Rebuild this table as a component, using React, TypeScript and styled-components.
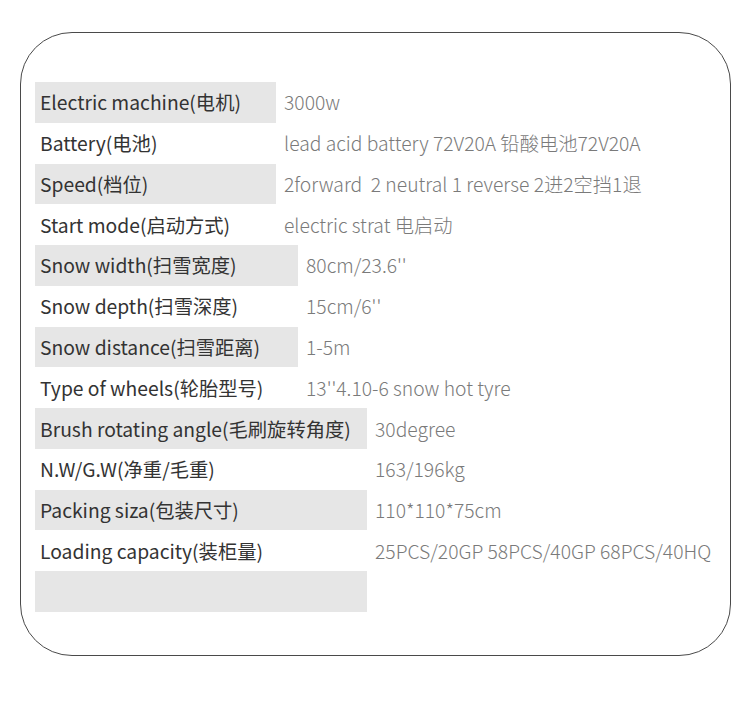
import React from "react";
import styled, { createGlobalStyle } from "styled-components";

const GlobalStyle = createGlobalStyle`
  body {
    margin: 0;
    background: #ffffff;
    font-family: "Noto Sans CJK SC", "Noto Sans", sans-serif;
  }
`;

const Card = styled.div`
  box-sizing: border-box;
  margin: 32px 0 0 20px;
  width: 711px;
  height: 624px;
  border: 1px solid #4a4a4a;
  border-radius: 52px;
  padding: 49px 14px 0 14px;
`;

const Group = styled.div<{ $labelWidth: number }>`
  display: grid;
  grid-template-columns: ${(p) => p.$labelWidth}px 1fr;
  grid-auto-rows: 40.77px;
`;

const Row = styled.div<{ $shaded: boolean }>`
  display: contents;

  & > span:first-child {
    background: ${(p) => (p.$shaded ? "#e6e6e6" : "transparent")};
  }
`;

const Label = styled.span`
  display: flex;
  align-items: center;
  padding-left: 5px;
  font-size: 19.3px;
  color: #333333;
  white-space: pre;
`;

const Value = styled.span`
  display: flex;
  align-items: center;
  padding-left: 8px;
  font-size: 19.3px;
  font-weight: 300;
  color: #7a7a7a;
  white-space: pre;
`;

type Spec = [string, string];

const groups: { width: number; rows: Spec[] }[] = [
  {
    width: 241,
    rows: [
      ["Electric machine(电机)", "3000w"],
      ["Battery(电池)", "lead acid battery 72V20A 铅酸电池72V20A"],
      ["Speed(档位)", "2forward  2 neutral 1 reverse 2进2空挡1退"],
      ["Start mode(启动方式)", "electric strat 电启动"],
    ],
  },
  {
    width: 263,
    rows: [
      ["Snow width(扫雪宽度)", "80cm/23.6''"],
      ["Snow depth(扫雪深度)", "15cm/6''"],
      ["Snow distance(扫雪距离)", "1-5m"],
      ["Type of wheels(轮胎型号)", "13''4.10-6 snow hot tyre"],
    ],
  },
  {
    width: 332,
    rows: [
      ["Brush rotating angle(毛刷旋转角度)", "30degree"],
      ["N.W/G.W(净重/毛重)", "163/196kg"],
      ["Packing siza(包装尺寸)", "110*110*75cm"],
      ["Loading capacity(装柜量)", "25PCS/20GP 58PCS/40GP 68PCS/40HQ"],
      ["", ""],
    ],
  },
];

export default function App() {
  return (
    <>
      <GlobalStyle />
      <Card>
        {groups.map((g, gi) => (
          <Group key={gi} $labelWidth={g.width}>
            {g.rows.map(([label, value], ri) => (
              <Row key={ri} $shaded={ri % 2 === 0}>
                <Label>{label}</Label>
                <Value>{value}</Value>
              </Row>
            ))}
          </Group>
        ))}
      </Card>
    </>
  );
}
